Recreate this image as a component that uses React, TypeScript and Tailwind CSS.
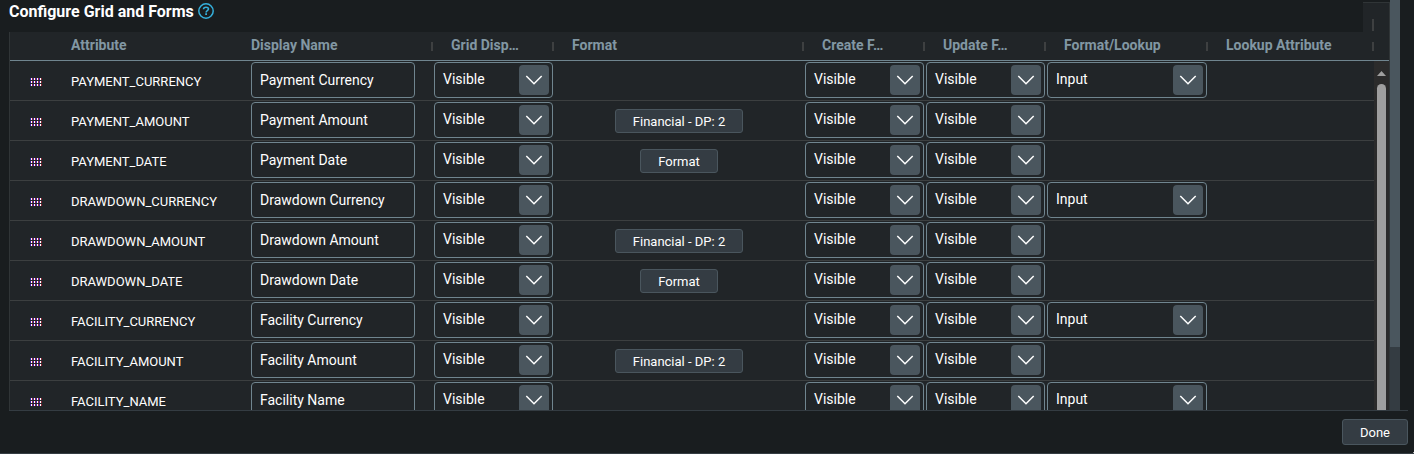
import React from "react";

type Row = { attribute: string; name: string; format?: string; lookup?: string };

const rows: Row[] = [
  { attribute: "PAYMENT_CURRENCY", name: "Payment Currency", lookup: "Input" },
  { attribute: "PAYMENT_AMOUNT", name: "Payment Amount", format: "Financial - DP: 2" },
  { attribute: "PAYMENT_DATE", name: "Payment Date", format: "Format" },
  { attribute: "DRAWDOWN_CURRENCY", name: "Drawdown Currency", lookup: "Input" },
  { attribute: "DRAWDOWN_AMOUNT", name: "Drawdown Amount", format: "Financial - DP: 2" },
  { attribute: "DRAWDOWN_DATE", name: "Drawdown Date", format: "Format" },
  { attribute: "FACILITY_CURRENCY", name: "Facility Currency", lookup: "Input" },
  { attribute: "FACILITY_AMOUNT", name: "Facility Amount", format: "Financial - DP: 2" },
  { attribute: "FACILITY_NAME", name: "Facility Name", lookup: "Input" },
];

const columns =
  "grid grid-cols-[61px_180px_182px_121px_250px_121px_121px_162px_166px]";

function DragHandle() {
  return (
    <svg width="12" height="8" viewBox="0 0 12 8" shapeRendering="crispEdges">
      {[0, 3, 6].map((y) =>
        [0, 3, 6, 9].map((x) => (
          <g key={`${x}-${y}`}>
            <rect x={x} y={y} width="1" height="2" fill="#3b1fa0" />
            <rect x={x + 1} y={y} width="1" height="2" fill="#ffffff" />
            <rect x={x + 2} y={y} width="1" height="2" fill="#8c2638" />
          </g>
        ))
      )}
    </svg>
  );
}

function Select({ value }: { value: string }) {
  return (
    <button className="ml-px mt-px flex h-9 w-[calc(100%-2px)] items-start justify-between rounded-[4px] border border-[#70858f] pl-2 pr-[3px] pt-[2px] text-left text-[14px] text-white">
      <span className="pt-1 leading-[20px]">{value}</span>
      <span className="flex size-[30px] items-center justify-center rounded-[4px] bg-[#4a565e]">
        <svg width="18" height="12" viewBox="0 0 18 12" fill="none">
          <path d="M1.3 2L9 9.8L16.7 2" stroke="#fff" strokeWidth="1.5" />
        </svg>
      </span>
    </button>
  );
}

function HeaderCell({ label, divider = true, pad = "pl-[18px]" }: { label: string; divider?: boolean; pad?: string }) {
  return (
    <div className={`flex items-center justify-between ${pad}`}>
      <span className="leading-[18px]">{label}</span>
      {divider && <span className="mt-[3px] h-[9px] w-[2px] bg-[#3e4041]" />}
    </div>
  );
}

export default function App() {
  return (
    <div className="relative flex h-[454px] w-[1414px] flex-col overflow-hidden border-b border-[#343c42] bg-[#191d1f] font-['Roboto',sans-serif] text-white">
      <div className="flex h-[410px] shrink-0">
        <div className="flex w-[1390px] flex-col pl-[9px]">
          <div className="flex h-8 shrink-0 justify-between">
            <h1 className="flex h-[23px] items-center text-[16px] font-bold leading-[23px]">
              Configure Grid and Forms
              <svg className="-mt-px ml-1" width="16" height="16" viewBox="0 0 16 16" fill="none">
                <circle cx="8" cy="8" r="7.2" stroke="#35b0dc" strokeWidth="1.5" />
                <path d="M5.500 6.200C5.600 4.900 6.600 4.200 8 4.200s2.500.8 2.500 1.900C10.500 7.600 8.100 7.600 8.100 9.400" stroke="#35b0dc" strokeWidth="1.6" />
                <path d="M7.200 10.300h1.800v1.700h-1.800z" fill="#35b0dc" />
              </svg>
            </h1>
            <div className="mt-[2px] flex w-[27px] border-r border-t border-[#303537] bg-[#212528] pl-[9px] pt-4">
              <span className="h-3 w-[2px] bg-[#3e4041]" />
            </div>
          </div>
          <div className="flex min-h-0 flex-1 flex-col border-l border-r border-[#303537] bg-[#212528]">
            <div className={`${columns} h-[29px] shrink-0 border-b border-[#70858f] pb-[2px] text-[14px] font-bold text-[#8297a3]`}>
              <div />
              <HeaderCell label="Attribute" divider={false} pad="pl-0" />
              <HeaderCell label="Display Name" pad="pl-0" />
              <HeaderCell label="Grid Disp…" />
              <HeaderCell label="Format" />
              <HeaderCell label="Create F…" />
              <HeaderCell label="Update F…" />
              <HeaderCell label="Format/Lookup" />
              <HeaderCell label="Lookup Attribute" />
            </div>
            <div className="flex min-h-0 flex-1">
              <div className="w-[1364px] overflow-hidden">
                {rows.map((row) => (
                  <div key={row.attribute} className={`${columns} h-10 border-b border-[#3c3f40]`}>
                    <div className="pl-5 pt-[17px]"><DragHandle /></div>
                    <div className="pt-[11px] text-[13px] leading-5">{row.attribute}</div>
                    <div className="pt-px">
                      <div className="flex h-9 w-[164px] items-center rounded-[4px] border border-[#70858f] pl-2 text-[14px]">{row.name}</div>
                    </div>
                    <div><Select value="Visible" /></div>
                    <div className="flex items-center justify-center pt-px">
                      {row.format && (
                        <button className={`h-6 rounded-[3px] border border-[#4a565e] bg-[#343c43] pt-[2px] text-[13px] leading-5 ${row.format === "Format" ? "w-[78px]" : "w-[128px]"}`}>
                          {row.format}
                        </button>
                      )}
                    </div>
                    <div><Select value="Visible" /></div>
                    <div><Select value="Visible" /></div>
                    <div>{row.lookup && <Select value={row.lookup} />}</div>
                    <div />
                  </div>
                ))}
              </div>
              <div className="flex w-[15px] flex-col items-center bg-[#2b2b2b] pt-[10px]">
                <svg width="9" height="5" viewBox="0 0 9 5"><path d="M4.500 0L9 5H0z" fill="#9f9f9f" /></svg>
                <div className="mt-2 w-[9px] flex-1 rounded-t-[5px] bg-[#9f9f9f]" />
              </div>
            </div>
          </div>
        </div>
        <div className="h-full w-[10px] bg-[#343c42]">
          <div className="h-[347px] bg-[#4a565e]" />
        </div>
      </div>
      <div className="ml-[9px] mr-[6px] flex justify-end border-t border-[#343c42] pt-2">
        <button className="h-[26px] w-[66px] rounded-[3px] border border-[#4a565e] bg-[#343c43] pt-[2px] text-[13px] leading-5">Done</button>
      </div>
      <span className="absolute bottom-0 right-0 size-px bg-[#b0b0b0]" />
    </div>
  );
}
